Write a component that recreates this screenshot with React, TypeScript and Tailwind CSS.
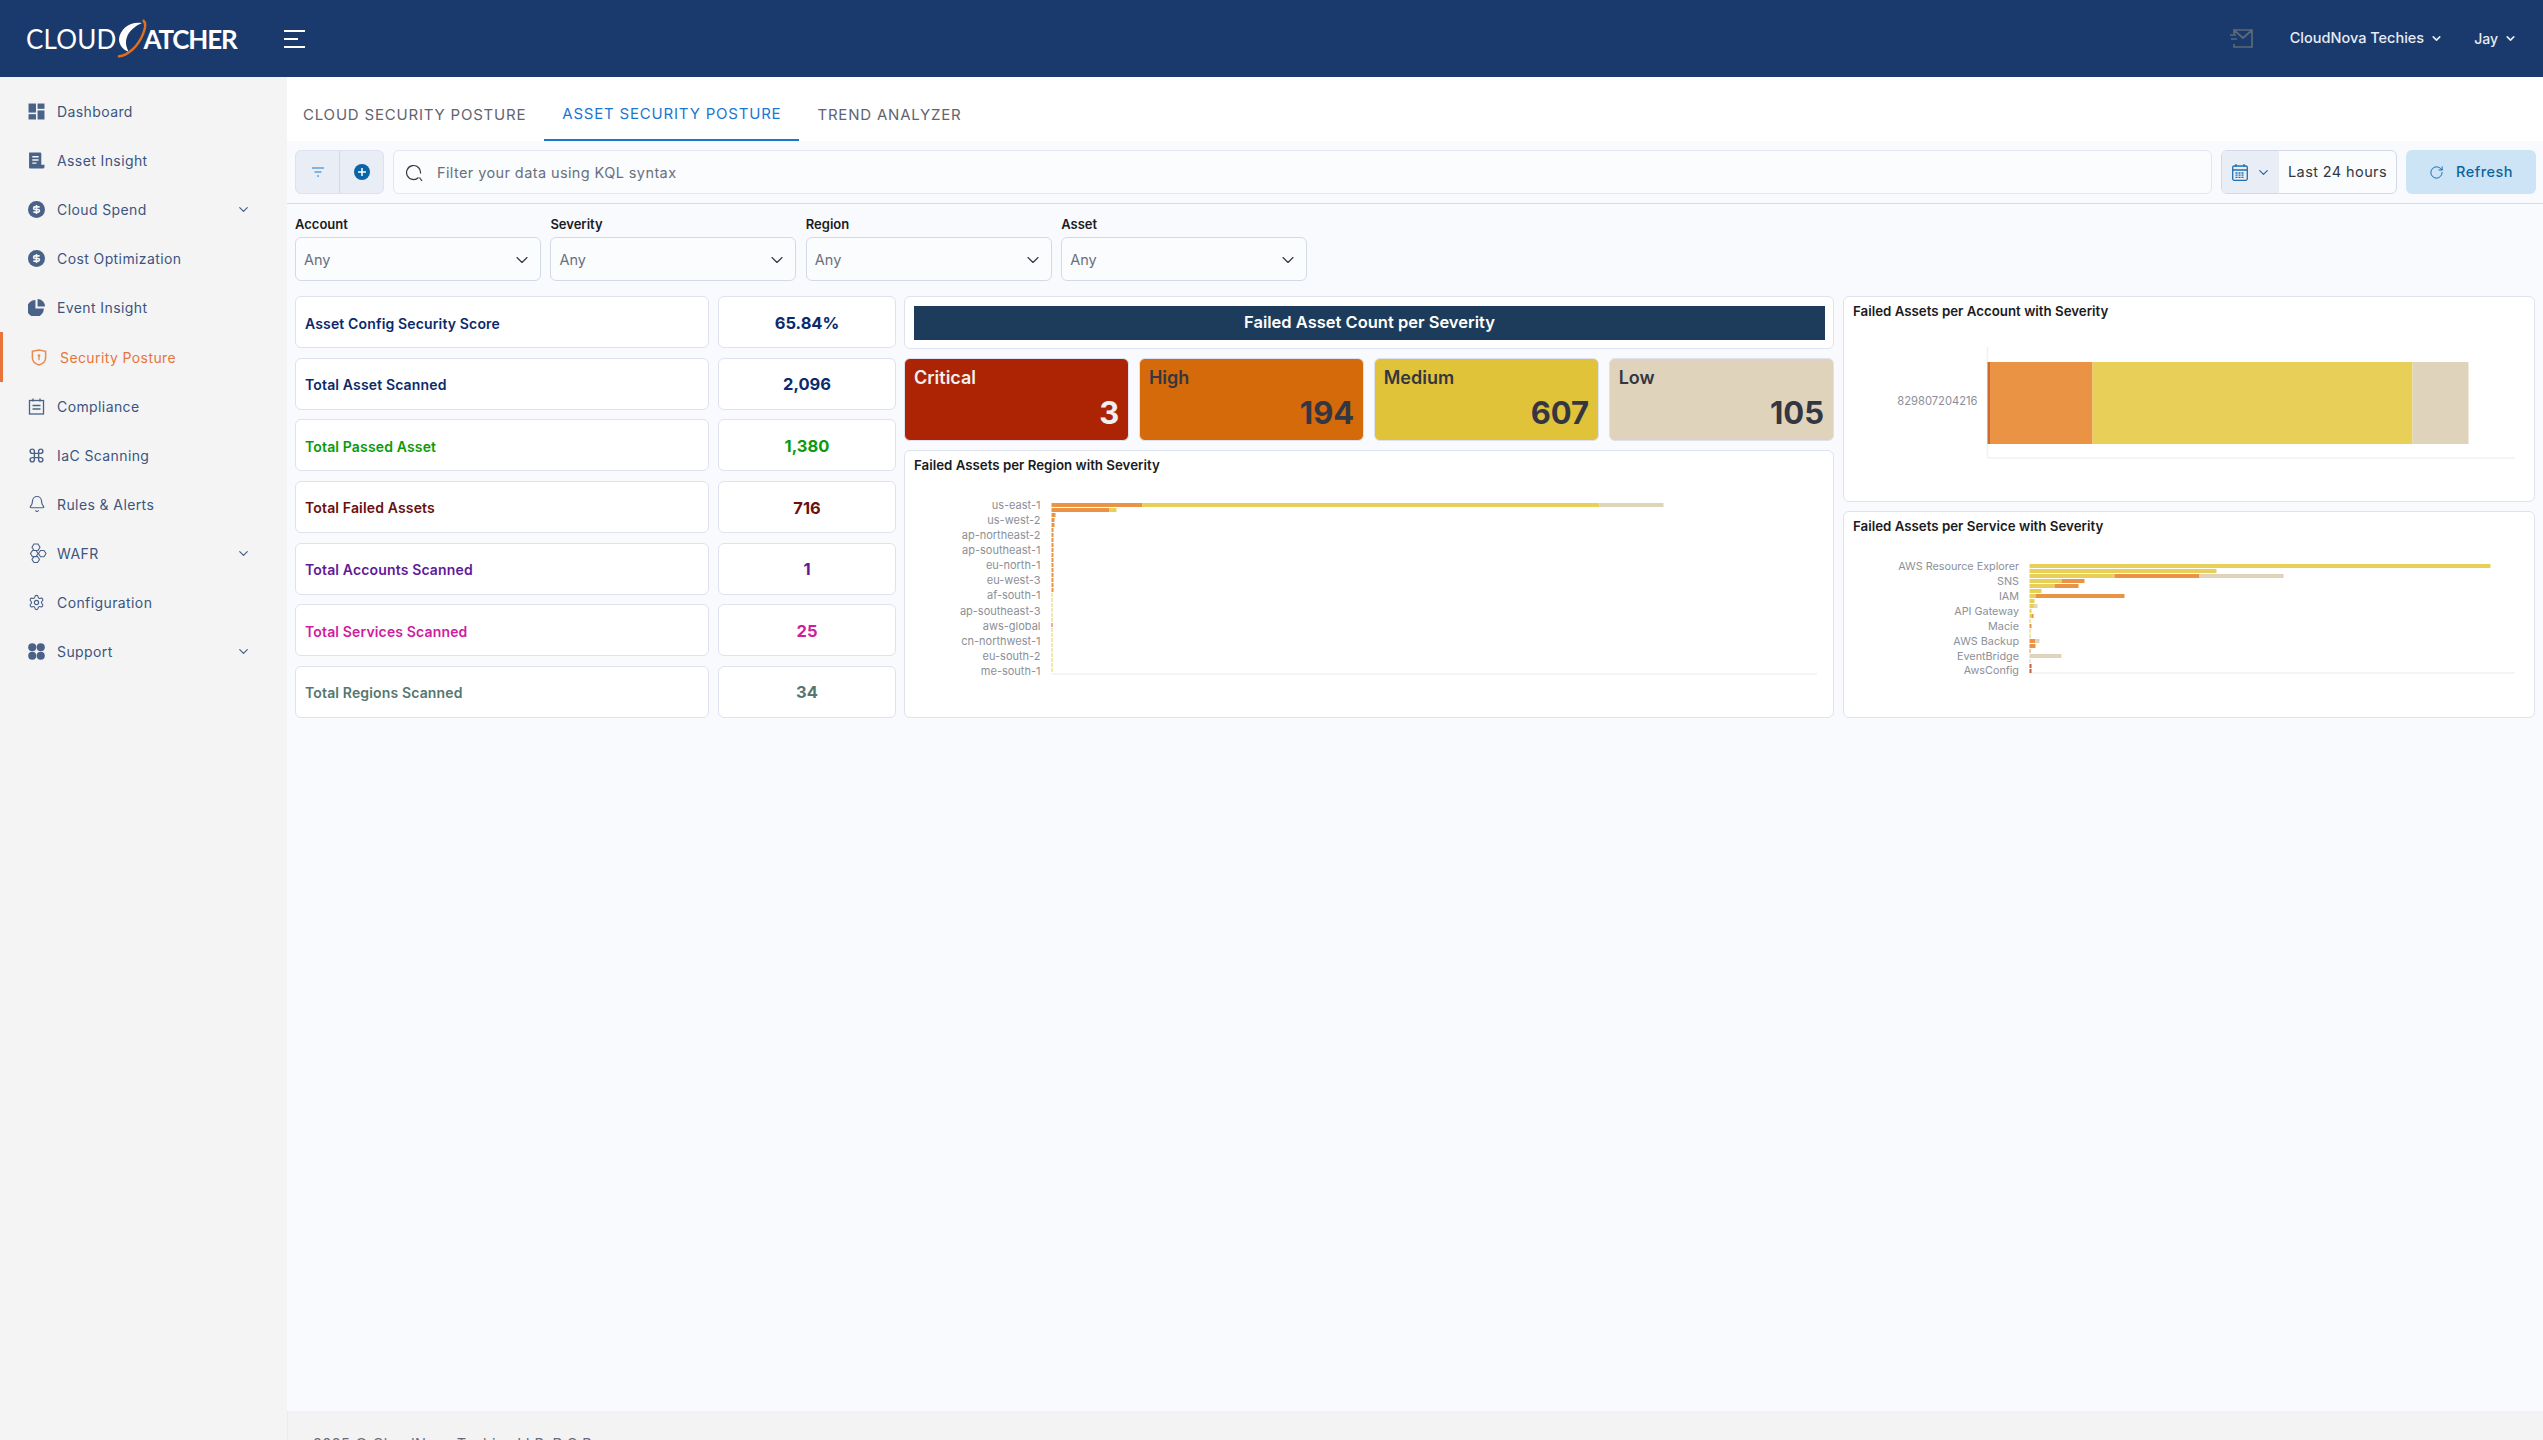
import React from 'react';
import { Bell, ChevronDown, Command, RotateCw, Settings } from 'lucide-react';

const sideItems = [
  { label: 'Dashboard', icon: 'dashboard' },
  { label: 'Asset Insight', icon: 'asset' },
  { label: 'Cloud Spend', icon: 'spend', caret: true },
  { label: 'Cost Optimization', icon: 'spend' },
  { label: 'Event Insight', icon: 'pie' },
  { label: 'Security Posture', icon: 'shield', active: true },
  { label: 'Compliance', icon: 'clipboard' },
  { label: 'IaC Scanning', icon: 'command' },
  { label: 'Rules & Alerts', icon: 'bell' },
  { label: 'WAFR', icon: 'hex', caret: true },
  { label: 'Configuration', icon: 'gear' },
  { label: 'Support', icon: 'apps', caret: true },
];

const stats = [
  { label: 'Asset Config Security Score', value: '65.84%', color: 'text-[#0b2a6b]' },
  { label: 'Total Asset Scanned', value: '2,096', color: 'text-[#0b2a6b]' },
  { label: 'Total Passed Asset', value: '1,380', color: 'text-[#0b9a0b]' },
  { label: 'Total Failed Assets', value: '716', color: 'text-[#6b0f0f]' },
  { label: 'Total Accounts Scanned', value: '1', color: 'text-[#5f1a9a]' },
  { label: 'Total Services Scanned', value: '25', color: 'text-[#d01c9f]' },
  { label: 'Total Regions Scanned', value: '34', color: 'text-[#55776f]' },
];

const severities = [
  { label: 'Critical', value: '3', box: 'bg-[#ad2405] text-[#f0f0f2]' },
  { label: 'High', value: '194', box: 'bg-[#d56a0a] text-[#343741]' },
  { label: 'Medium', value: '607', box: 'bg-[#e0c338] text-[#343741]' },
  { label: 'Low', value: '105', box: 'bg-[#e0d3bc] text-[#343741]' },
];

const ORANGE = '#ea9344';
const YELLOW = '#e8cf57';
const BEIGE = '#e0d3bc';
const RED = '#cf5a3c';

const regionLabels = ['us-east-1', 'us-west-2', 'ap-northeast-2', 'ap-southeast-1', 'eu-north-1', 'eu-west-3', 'af-south-1', 'ap-southeast-3', 'aws-global', 'cn-northwest-1', 'eu-south-2', 'me-south-1'];
const serviceLabels = ['AWS Resource Explorer', 'SNS', 'IAM', 'API Gateway', 'Macie', 'AWS Backup', 'EventBridge', 'AwsConfig'];

// each row is a list of [colour, width] going left to right
const regionRows: [string, number][][] = [
  [[ORANGE, 91], [YELLOW, 457], [BEIGE, 64]],
  [[ORANGE, 58], [YELLOW, 7]],
  [[ORANGE, 4]],
  [[ORANGE, 3]],
  [[ORANGE, 3]],
  ...Array.from({ length: 13 }, (): [string, number][] => [[ORANGE, 2]]),
  ...Array.from({ length: 16 }, (_, i): [string, number][] => [[i === 6 ? RED : YELLOW, 1]]),
];

const serviceRows: [string, number][][] = [
  [[YELLOW, 461]],
  [[YELLOW, 187]],
  [[YELLOW, 85], [ORANGE, 85], [BEIGE, 84]],
  [[YELLOW, 32], [ORANGE, 23]],
  [[YELLOW, 25], [ORANGE, 24]],
  [[YELLOW, 12]],
  [[YELLOW, 6], [ORANGE, 89]],
  [[YELLOW, 5]],
  [[YELLOW, 5], [BEIGE, 3]],
  [[YELLOW, 2]],
  [[YELLOW, 2], [ORANGE, 2]],
  [[YELLOW, 1]],
  [[ORANGE, 2]],
  [[YELLOW, 1]],
  [[YELLOW, 1]],
  [[ORANGE, 6], [BEIGE, 4]],
  [[ORANGE, 6]],
  [[ORANGE, 1]],
  [[BEIGE, 32]],
  [[BEIGE, 1]],
  [[RED, 2]],
  [[RED, 2]],
];

function SideIcon({ name }: { name: string }) {
  const cls = 'w-[17px] h-[17px] text-[#4a6288]';
  switch (name) {
    case 'dashboard':
      return (
        <svg viewBox="0 0 16 16" className={cls} fill="currentColor">
          <rect x="0.5" y="0.5" width="7" height="8.5" />
          <rect x="9" y="0.5" width="6.5" height="5" />
          <rect x="0.5" y="10.5" width="7" height="5" />
          <rect x="9" y="7" width="6.5" height="8.5" />
        </svg>
      );
    case 'asset':
      return (
        <svg viewBox="0 0 16 16" className={cls}>
          <path d="M1.5 0.5h10a1 1 0 0 1 1 1V12h3v2a1.5 1.5 0 0 1-1.5 1.5H2a1 1 0 0 1-1-1V1a.5.5 0 0 1 .5-.5z" fill="currentColor" />
          <path d="M4 4.5h6M4 7.5h6M4 10.5h4" stroke="#f4f4f4" strokeWidth="1.3" />
        </svg>
      );
    case 'spend':
      return (
        <svg viewBox="0 0 16 16" className={cls}>
          <circle cx="8" cy="8" r="8" fill="currentColor" />
          <path d="M11 5.500H6.500a1.200 1.200 0 0 0 0 2.500h3a1.200 1.200 0 0 1 0 2.500H5M8 3.800v8.400" stroke="#f4f4f4" strokeWidth="1.500" fill="none" />
        </svg>
      );
    case 'pie':
      return (
        <svg viewBox="0 0 16 16" className={cls} fill="currentColor">
          <path d="M7 1a8 8 0 1 0 8 8H7z" />
          <path d="M9 0a7 7 0 0 1 7 7H9z" />
        </svg>
      );
    case 'shield':
      return (
        <svg viewBox="0 0 16 18" className="w-[16px] h-[17px] text-[#ea8a4e]" fill="none" stroke="currentColor">
          <path d="M1 2.500 8 1l7 1.500v7c0 3.500-3.500 6.200-7 7.500-3.500-1.300-7-4-7-7.500z" strokeWidth="1.600" />
          <circle cx="8" cy="7" r="1.400" fill="currentColor" stroke="none" />
          <path d="M8 8v4" strokeWidth="1.400" />
        </svg>
      );
    case 'clipboard':
      return (
        <svg viewBox="0 0 16 17" className={cls} fill="none" stroke="currentColor" strokeWidth="1.300">
          <rect x="1" y="2.500" width="14" height="13.500" />
          <path d="M4.500 0.500v3M11.500 0.500v3M4 7.500h8M4 11h8" />
        </svg>
      );
    case 'command':
      return <Command className={cls} strokeWidth={2} />;
    case 'bell':
      return <Bell className="w-[18px] h-[18px] text-[#4a6288]" strokeWidth={1.6} />;
    case 'hex':
      return (
        <svg viewBox="0 0 20 20" className="w-[20px] h-[20px] text-[#4a6288]" fill="none" stroke="currentColor" strokeWidth="1.100">
          <path d="M6 1h4l2 3.200-2 3.300H6L4 4.200z" />
          <path d="M12.500 7.500h3.500l2 3-2 3.200h-3.500l-2-3.200z" />
          <path d="M4.500 7.500H8l2 3-2 3.200H4.500l-2-3.200z" />
          <path d="M6 13.500h3.500l2 3-2 3H6l-2-3z" />
        </svg>
      );
    case 'gear':
      return <Settings className={cls} strokeWidth={1.6} />;
    default:
      return (
        <svg viewBox="0 0 16 16" className={cls} fill="currentColor">
          <circle cx="4" cy="4" r="3.800" />
          <circle cx="12" cy="4" r="3.800" />
          <circle cx="4" cy="12" r="3.800" />
          <circle cx="12" cy="12" r="3.800" />
        </svg>
      );
  }
}

function Logo() {
  return (
    <div className="relative flex items-center w-[214px] h-[40px] ml-[26px] text-white leading-none font-['Lato',sans-serif]">
      <span className="font-normal text-[26px] tracking-[0.2px]">CLOUD</span>
      <span className="ml-[27px] font-bold text-[26px] tracking-[-1.200px]">ATCHER</span>
      <svg viewBox="0 0 34 40" className="absolute left-[90px] top-0 w-[34px] h-[40px]">
        <path d="M26 4C14 2 4 10 3 20c0 6 4 11 10 13-3-5-4-10-2-15 2-6 8-11 15-14z" fill="#fff" />
        <path d="M27 1c6 5-2 22-11 30-5 4-11 7-14 6" fill="none" stroke="#e0701f" strokeWidth="2.500" />
      </svg>
    </div>
  );
}

function Sidebar() {
  return (
    <aside className="w-[287px] shrink-0 bg-[#f4f4f4] pt-[10px]">
      {sideItems.map((item) => (
        <div
          key={item.label}
          className={`relative flex items-center h-[49.100px] pl-[28px] pr-[36px] text-[14px] tracking-[0.4px] ${
            item.active ? 'text-[#e8743b]' : 'text-[#3c5480]'
          }`}
        >
          {item.active && <div className="absolute left-0 top-0 bottom-0 w-[3px] bg-[#e8743b]" />}
          <div className={`flex justify-start shrink-0 ${item.active ? 'w-[32px] pl-[3px]' : 'w-[29px]'}`}>
            <SideIcon name={item.icon} />
          </div>
          <span className="flex-1">{item.label}</span>
          {item.caret && <ChevronDown className="w-[15px] h-[15px] text-[#4a6288]" />}
        </div>
      ))}
    </aside>
  );
}

function BarChart({
  width,
  height,
  axisX,
  axisY,
  axisEnd,
  rowTop,
  labels,
  labelYs,
  labelX,
  rows,
  fontSize,
}: {
  width: number;
  height: number;
  axisX: number;
  axisY: number;
  axisEnd: number;
  rowTop: number;
  labels: string[];
  labelYs: number[];
  labelX: number;
  rows: [string, number][][];
  fontSize: number;
}) {
  return (
    <svg width={width} height={height} className="block">
      <line x1={axisX} y1={axisY} x2={axisEnd} y2={axisY} stroke="#f0f1f3" strokeWidth="1.500" />
      {rows.map((row, r) => {
        let x = axisX;
        return row.map(([color, w], i) => {
          const rect = <rect key={`${r}-${i}`} x={x} y={rowTop + r * 5} width={w} height={4} fill={color} />;
          x += w;
          return rect;
        });
      })}
      {labels.map((label, i) => (
        <text key={label} x={labelX} y={labelYs[i]} textAnchor="end" dominantBaseline="central" fontSize={fontSize} fill="#8c8f98">
          {label}
        </text>
      ))}
    </svg>
  );
}

export default function App() {
  return (
    <div className="h-[1440px] overflow-hidden flex flex-col bg-[#f9fafd] font-['Inter',sans-serif]">
      {/* Top bar */}
      <header className="h-[77px] shrink-0 bg-[#1a3a6e] flex items-center shadow-sm">
        <Logo />
        <div className="ml-[44px] flex flex-col gap-[6px] w-[21px]">
          <div className="h-[2px] w-[21px] bg-white" />
          <div className="h-[2px] w-[14px] bg-white" />
          <div className="h-[2px] w-[21px] bg-white" />
        </div>
        <div className="flex-1" />
        <svg viewBox="0 0 23 19" className="w-[23px] h-[19px] text-[#5c6a76] mr-[37px]" fill="none" stroke="currentColor" strokeWidth="1.700">
          <path d="M4 1h18v17H4v-3M4 5V1l9 8 9-8M0 6h6M1 10h6" />
        </svg>
        <span className="text-[14.500px] font-medium text-[#e8ecf2] mb-[2px]">CloudNova Techies</span>
        <ChevronDown className="w-[13px] h-[13px] text-[#e8ecf2] ml-[6px] mr-[31px]" strokeWidth={3} />
        <span className="text-[14px] font-medium text-[#e8ecf2]">Jay</span>
        <ChevronDown className="w-[13px] h-[13px] text-[#e8ecf2] ml-[6px] mr-[26px]" strokeWidth={3} />
      </header>

      <div className="flex flex-1 min-h-0">
        <Sidebar />

        <main className="flex-1 min-w-0 flex flex-col">
          {/* Tabs */}
          <div className="h-[64px] shrink-0 bg-white flex items-end text-[15px] tracking-[0.8px] text-[#5f6470]">
            <div className="h-[64px] pl-[16px] pr-[18px] pt-[12px] flex items-center">CLOUD SECURITY POSTURE</div>
            <div className="h-[64px] px-[18px] pt-[12px] flex items-center text-[#1b76d2] border-b-2 border-[#1b76d2]">ASSET SECURITY POSTURE</div>
            <div className="h-[64px] px-[18px] pt-[12px] flex items-center">TREND ANALYZER</div>
          </div>

          {/* Query bar */}
          <div className="h-[63px] shrink-0 border-b border-[#d8dce8] pt-[9px] pl-[8px] pr-[7px] flex gap-[9px]">
            <div className="w-[89px] h-[44px] flex rounded-[6px] border border-[#dde2ee] bg-[#e9edf5]">
              <div className="w-[44px] flex items-center justify-center border-r border-[#d3d9e6]">
                <svg viewBox="0 0 12 10" className="w-[12px] h-[10px]" fill="none" stroke="#1f7fc0" strokeWidth="1.200">
                  <path d="M0 1h12M2.500 5h7M5 9h2" />
                </svg>
              </div>
              <div className="flex-1 flex items-center justify-center">
                <svg viewBox="0 0 16 16" className="w-[16px] h-[16px]">
                  <circle cx="8" cy="8" r="8" fill="#0a64a8" />
                  <path d="M8 4v8M4 8h8" stroke="#fff" strokeWidth="1.500" />
                </svg>
              </div>
            </div>
            <div className="flex-1 h-[44px] rounded-[6px] border border-[#e3e6f0] bg-[#fbfcfe] flex items-center pl-[12px] pt-[1px] text-[14.500px] tracking-[0.4px] text-[#69707d]">
              <svg viewBox="0 0 18 18" className="w-[18px] h-[18px] mr-[13px]" fill="none" stroke="#343741" strokeWidth="1.200">
                <path d="M12.500 13.500A7 7 0 1 1 14.500 9.500" />
                <path d="M13.500 13.500 16 17" />
              </svg>
              Filter your data using KQL syntax
            </div>
            <div className="w-[176px] h-[44px] rounded-[6px] border border-[#d3dae6] bg-[#fbfcfe] flex overflow-hidden">
              <div className="w-[57px] bg-[#e9edf5] flex items-center pl-[10px] gap-[8px]">
                <svg viewBox="0 0 16 17" className="w-[16px] h-[17px]" fill="none" stroke="#1f6fb0" strokeWidth="1.300">
                  <rect x="0.700" y="2" width="14.600" height="14.300" rx="1.500" />
                  <path d="M0.700 6h14.600M4 0v3M12 0v3" />
                  <path d="M3.500 9h9M3.500 11.200h9M3.500 13.400h9" strokeDasharray="2 1" />
                </svg>
                <ChevronDown className="w-[15px] h-[15px] text-[#1f6fb0]" strokeWidth={2} />
              </div>
              <div className="flex-1 flex items-center pl-[9px] text-[14.500px] tracking-[0.4px] text-[#343741] whitespace-nowrap">Last 24 hours</div>
            </div>
            <div className="w-[130px] h-[44px] rounded-[6px] bg-[#cce4f5] flex items-center justify-center gap-[12px] text-[14.500px] tracking-[0.5px] font-medium text-[#0b64a0]">
              <RotateCw className="w-[15px] h-[15px]" strokeWidth={1.500} />
              Refresh
            </div>
          </div>

          {/* Filters */}
          <div className="flex gap-[9.400px] pl-[8px] pt-[11px] shrink-0">
            {['Account', 'Severity', 'Region', 'Asset'].map((name) => (
              <div key={name} className="w-[246px]">
                <div className="h-[22px] text-[13px] font-semibold text-[#1a1c21] leading-[18px]">{name}</div>
                <div className="h-[44px] rounded-[6px] border border-[#d3dae6] bg-[#fbfcfe] flex items-center justify-between pl-[8px] pr-[8px] pt-[1px] text-[14.500px] text-[#69707d]">
                  Any
                  <ChevronDown className="w-[20px] h-[20px] text-[#343741]" strokeWidth={1.400} />
                </div>
              </div>
            ))}
          </div>

          {/* Dashboard grid */}
          <div className="flex pl-[8px] pr-[8px] pt-[15px] shrink-0 h-[437px]">
            <div className="w-[414px] mr-[9px] grid grid-rows-7 gap-[9.400px] h-[422px]">
              {stats.map((s) => (
                <div key={s.label} className={`rounded-[6px] border border-[#dde2ee] bg-white flex items-center pl-[9px] pt-[2px] text-[14px] tracking-[0.15px] font-semibold ${s.color}`}>
                  {s.label}
                </div>
              ))}
            </div>
            <div className="w-[178px] mr-[8px] grid grid-rows-7 gap-[9.400px] h-[422px]">
              {stats.map((s) => (
                <div key={s.label} className={`rounded-[6px] border border-[#dde2ee] bg-white flex items-center justify-center pt-[2px] text-[16.500px] font-bold ${s.color}`}>
                  {s.value}
                </div>
              ))}
            </div>
            <div className="w-[930px] mr-[9px] flex flex-col gap-[9px] h-[422px]">
              <div className="h-[53px] rounded-[6px] border border-[#dde2ee] bg-white pl-[9px] pr-[8px] flex items-center">
                <div className="w-full h-[34px] bg-[#1d3c5b] flex items-center justify-center text-[16.500px] font-semibold text-white">
                  Failed Asset Count per Severity
                </div>
              </div>
              <div className="h-[83px] flex gap-[9.500px]">
                {severities.map((s) => (
                  <div key={s.label} className={`flex-1 rounded-[6px] border border-[#dde2ee] pl-[9px] pr-[9px] pt-[7px] flex flex-col ${s.box}`}>
                    <div className="text-[18px] font-semibold leading-[24px]">{s.label}</div>
                    <div className="text-right text-[31px] font-bold leading-[36px] mt-[5px]">{s.value}</div>
                  </div>
                ))}
              </div>
              <div className="flex-1 rounded-[6px] border border-[#dde2ee] bg-white overflow-hidden">
                <div className="pl-[9px] pt-[5px] h-[22px] text-[13.300px] font-semibold leading-[18px] text-[#1a1c21]">Failed Assets per Region with Severity</div>
                <BarChart
                  width={928}
                  height={240}
                  axisX={146.500}
                  axisY={201}
                  axisEnd={912}
                  rowTop={30}
                  labels={regionLabels}
                  labelX={135.500}
                  labelYs={regionLabels.map((_, i) => 31.500 + i * 15.150)}
                  rows={regionRows}
                  fontSize={11}
                />
              </div>
            </div>
            <div className="flex-1 flex flex-col gap-[9px] h-[422px]">
              <div className="h-[206px] rounded-[6px] border border-[#dde2ee] bg-white overflow-hidden">
                <div className="pl-[9px] pt-[5px] h-[22px] text-[13.300px] font-semibold leading-[18px] text-[#1a1c21]">Failed Assets per Account with Severity</div>
                <svg width="690" height="180" className="block">
                  <line x1="143.500" y1="28" x2="143.500" y2="139" stroke="#f0f1f3" strokeWidth="1.500" />
                  <line x1="143.500" y1="139" x2="671" y2="139" stroke="#f0f1f3" strokeWidth="1.500" />
                  <rect x="143.500" y="43" width="2.500" height="82" fill="#cd6a35" />
                  <rect x="146" y="43" width="102.500" height="82" fill={ORANGE} />
                  <rect x="248.500" y="43" width="320" height="82" fill={YELLOW} />
                  <rect x="568.500" y="43" width="56" height="82" fill={BEIGE} />
                  <text x="133.500" y="82" textAnchor="end" dominantBaseline="central" fontSize="11.200" fill="#8c8f98">829807204216</text>
                </svg>
              </div>
              <div className="h-[207px] rounded-[6px] border border-[#dde2ee] bg-white overflow-hidden">
                <div className="pl-[9px] pt-[5px] h-[22px] text-[13.300px] font-semibold leading-[18px] text-[#1a1c21]">Failed Assets per Service with Severity</div>
                <BarChart
                  width={690}
                  height={180}
                  axisX={185.500}
                  axisY={139}
                  axisEnd={671}
                  rowTop={30}
                  labels={serviceLabels}
                  labelX={175}
                  labelYs={[32, 47, 62, 77, 92, 107, 122, 136]}
                  rows={serviceRows}
                  fontSize={10.800}
                />
              </div>
            </div>
          </div>

          <div className="flex-1" />

          {/* Footer, cut off by the window */}
          <footer className="h-[29px] shrink-0 bg-[#f3f3f3] border-l border-[#ebebeb] pl-[25px] pt-[24px] text-[14.500px] tracking-[0.4px] text-[#6a6a7a] leading-[18px]">
            2025 © CloudNova Techies LLP. D.O.P
          </footer>
        </main>
      </div>
    </div>
  );
}
